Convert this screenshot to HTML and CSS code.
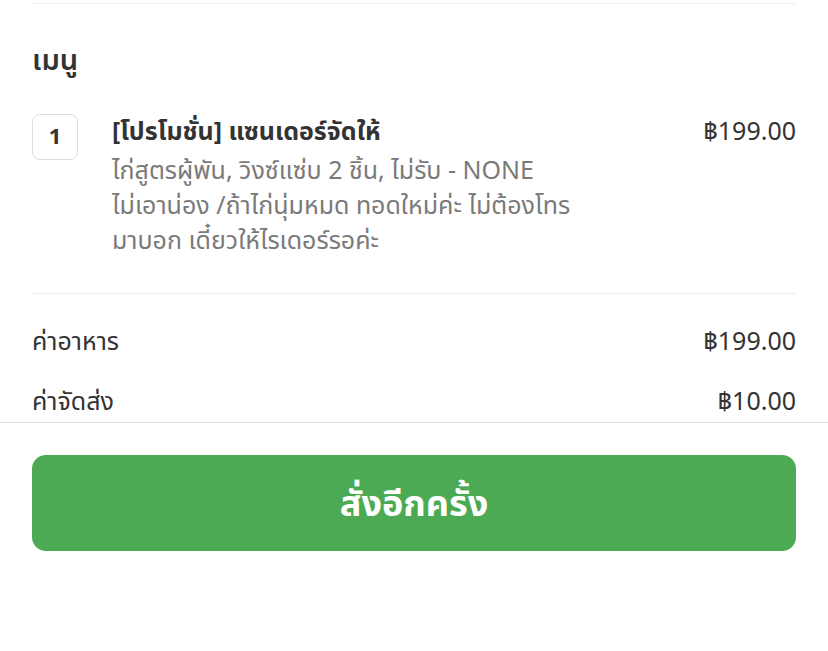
FILE: index.html
```html
<!DOCTYPE html>
<html lang="th">
<head>
<meta charset="utf-8">
<link rel="stylesheet" href="styles.css">
</head>
<body>
<div class="scroll">
  <div class="inner">
    <div class="divider top"></div>
    <h2 class="heading">เมนู</h2>
    <div class="item">
      <div class="qty">1</div>
      <div class="info">
        <div class="title">[โปรโมชั่น] แซนเดอร์จัดให้</div>
        <div class="desc">ไก่สูตรผู้พัน, วิงซ์แซ่บ 2 ชิ้น, ไม่รับ - NONE<br>ไม่เอาน่อง /ถ้าไก่นุ่มหมด ทอดใหม่ค่ะ ไม่ต้องโทร<br>มาบอก เดี๋ยวให้ไรเดอร์รอค่ะ</div>
      </div>
      <div class="price">฿199.00</div>
    </div>
    <div class="divider"></div>
    <div class="row"><span>ค่าอาหาร</span><span>฿199.00</span></div>
    <div class="row"><span>ค่าจัดส่ง</span><span>฿10.00</span></div>
  </div>
</div>
<div class="footer">
  <button class="reorder">สั่งอีกครั้ง</button>
</div>
</body>
</html>
```
FILE: styles.css
```css
html, body {
  margin: 0;
  padding: 0;
  background: #ffffff;
  font-family: "Noto Sans Thai", "Noto Sans", "DejaVu Sans", sans-serif;
  color: #333333;
}
.scroll {
  height: 423px;
  overflow: hidden;
  border-bottom: 1px solid #dedede;
  box-sizing: border-box;
}
.inner {
  padding: 0 32px;
  display: flex;
  flex-direction: column;
}
.divider {
  height: 1px;
  background: #eeeeee;
  flex: none;
}
.divider.top {
  margin-top: 3px;
}
.heading {
  margin: 35px 0 0;
  font-size: 29px;
  font-weight: 600;
  line-height: 44px;
  color: #333;
}
.item {
  display: flex;
  align-items: flex-start;
  margin-top: 31px;
  padding-bottom: 34px;
}
.qty {
  width: 46px;
  height: 46px;
  box-sizing: border-box;
  border: 1.5px solid #dcdcdc;
  border-radius: 8px;
  display: flex;
  align-items: center;
  justify-content: center;
  font-size: 22px;
  font-weight: 700;
  color: #333;
  flex: none;
}
.info {
  margin-left: 34px;
  flex: 1;
}
.title {
  font-size: 25px;
  font-weight: 700;
  line-height: 36px;
  color: #333;
}
.desc {
  font-size: 25px;
  line-height: 35px;
  color: #7a7a7a;
  margin-top: 4px;
}
.price {
  font-size: 25px;
  line-height: 36px;
  color: #333;
  flex: none;
}
.row {
  display: flex;
  justify-content: space-between;
  align-items: center;
  height: 60px;
  font-size: 25px;
  color: #333;
  flex: none;
}
.divider + .row {
  margin-top: 18px;
}
.footer {
  padding: 32px 32px 0;
}
.reorder {
  display: block;
  width: 100%;
  height: 96px;
  border: none;
  border-radius: 14px;
  background: #4caa55;
  color: #fff;
  font-family: inherit;
  font-size: 36px;
  font-weight: 700;
  padding-top: 4px;
}
```
